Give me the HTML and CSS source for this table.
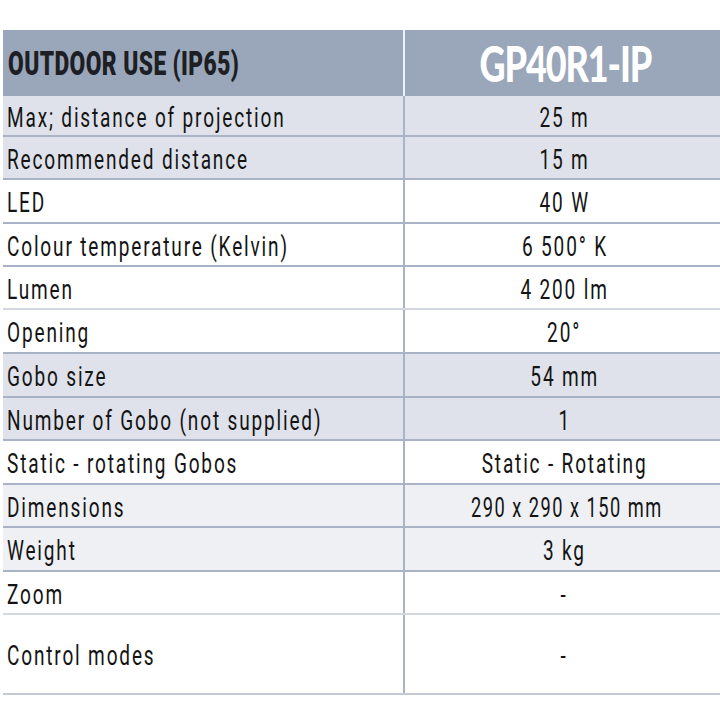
FILE: index.html
```
<!DOCTYPE html>
<html>
<head>
<meta charset="utf-8">
<link rel="stylesheet" href="styles.css">
</head>
<body>
<div class="spec">
  <div class="row head">
    <div class="cell label"><span class="txt hl">OUTDOOR USE (IP65)</span></div>
    <div class="cell value"><span class="txt model">GP40R1-IP</span></div>
  </div>
  <div class="row shade h41"><div class="cell label"><span class="txt">Max; distance of projection</span></div><div class="cell value"><span class="txt c">25 m</span></div></div>
  <div class="row shade h43"><div class="cell label"><span class="txt">Recommended distance</span></div><div class="cell value"><span class="txt c">15 m</span></div></div>
  <div class="row h44"><div class="cell label"><span class="txt">LED</span></div><div class="cell value"><span class="txt c">40 W</span></div></div>
  <div class="row h43"><div class="cell label"><span class="txt">Colour temperature (Kelvin)</span></div><div class="cell value"><span class="txt c">6 500° K</span></div></div>
  <div class="row h43 soft"><div class="cell label"><span class="txt">Lumen</span></div><div class="cell value"><span class="txt c">4 200 lm</span></div></div>
  <div class="row h44"><div class="cell label"><span class="txt">Opening</span></div><div class="cell value"><span class="txt c">20°</span></div></div>
  <div class="row shade h44"><div class="cell label"><span class="txt">Gobo size</span></div><div class="cell value"><span class="txt c">54 mm</span></div></div>
  <div class="row shade h43"><div class="cell label"><span class="txt">Number of Gobo (not supplied)</span></div><div class="cell value"><span class="txt c">1</span></div></div>
  <div class="row h44"><div class="cell label"><span class="txt">Static - rotating Gobos</span></div><div class="cell value"><span class="txt c">Static - Rotating</span></div></div>
  <div class="row light h43"><div class="cell label"><span class="txt">Dimensions</span></div><div class="cell value"><span class="txt c num">290 x 290 x 150 mm</span></div></div>
  <div class="row light h44"><div class="cell label"><span class="txt">Weight</span></div><div class="cell value"><span class="txt c">3 kg</span></div></div>
  <div class="row h43 soft"><div class="cell label"><span class="txt">Zoom</span></div><div class="cell value"><span class="txt c">-</span></div></div>
  <div class="row h80 last"><div class="cell label"><span class="txt">Control modes</span></div><div class="cell value"><span class="txt c">-</span></div></div>
</div>
</body>
</html>
```
FILE: styles.css
```
html, body {
  margin: 0;
  padding: 0;
  background: #ffffff;
}
body {
  font-family: Roboto, "Liberation Sans", sans-serif;
  color: #141414;
}
.spec {
  margin: 30px 0 0 3px;
  width: 717px;
}
.row {
  display: flex;
  box-sizing: border-box;
  border-bottom: 2px solid #a9b3c5;
}
.row.soft {
  border-bottom-color: #d3d8e0;
}
.row.last {
  border-bottom-color: #c3c9d3;
}
.row.head {
  height: 66px;
  background: #9aa6b9;
  border-bottom: none;
}
.row.shade { background: #dfe2ea; }
.row.light { background: #eef0f4; }
.h41 { height: 41px; }
.h43 { height: 43px; }
.h44 { height: 44px; }
.h80 { height: 80px; }
.cell {
  display: flex;
  align-items: center;
  box-sizing: border-box;
  overflow: hidden;
  white-space: nowrap;
}
.label {
  width: 402px;
  padding-left: 4px;
  border-right: 2px solid #a8b3c5;
}
.head .label {
  border-right-color: #eef1f5;
  padding-left: 5px;
}
.value {
  flex: 1;
  justify-content: center;
}
.txt {
  display: inline-block;
  font-size: 27px;
  letter-spacing: 2.6px;
  transform: scaleX(0.705);
  transform-origin: left center;
  line-height: 1;
  padding-top: 5px;
}
.txt.c {
  transform-origin: center center;
  margin-left: 4px;
}
.txt.num {
  letter-spacing: 2.2px;
  transform: scaleX(0.675);
  margin-left: 8px;
}
.txt.hl {
  font-size: 32.5px;
  font-weight: 900;
  letter-spacing: 0.6px;
  transform: scaleX(0.7);
  color: #1d1f24;
  padding-top: 2px;
}
.txt.model {
  font-family: Lato, "Open Sans", sans-serif;
  font-size: 50px;
  font-weight: 900;
  color: #ffffff;
  letter-spacing: -1.5px;
  transform: scaleX(0.72);
  transform-origin: center center;
  margin-left: 6px;
  padding-top: 0;
}
```
